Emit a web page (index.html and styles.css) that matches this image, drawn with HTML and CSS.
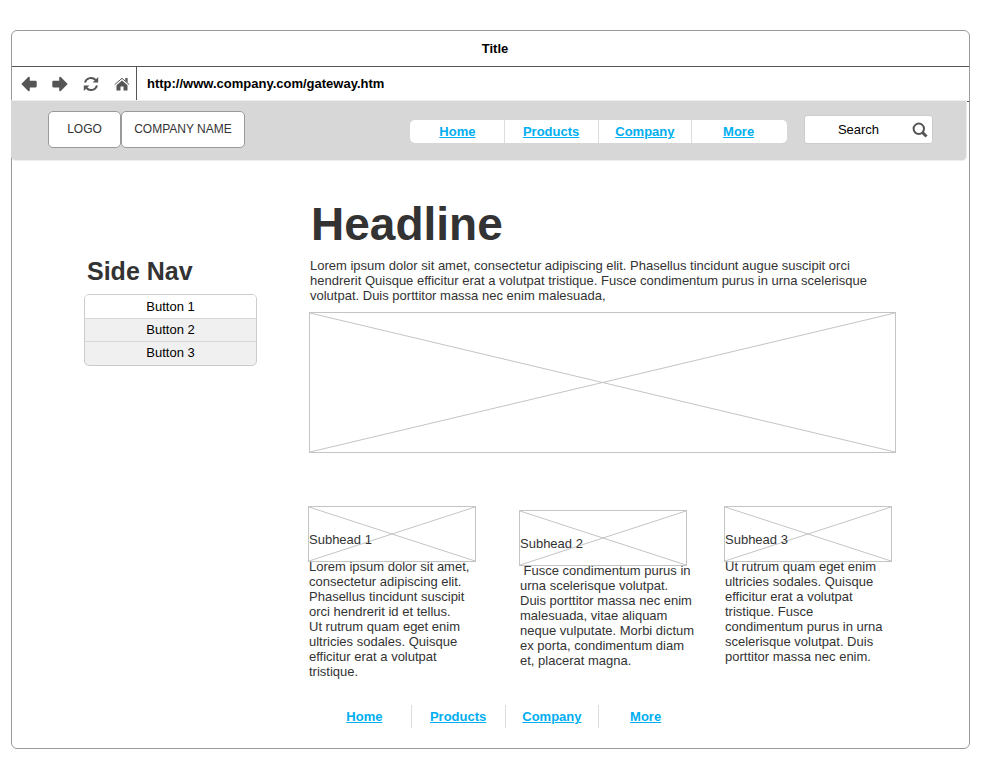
FILE: index.html
```html
<!DOCTYPE html>
<html lang="en">
  <head>
    <meta charset="UTF-8" />
    <meta name="viewport" content="width=device-width, initial-scale=1.0" />
    <title>Title</title>
    <link rel="stylesheet" href="styles.css">
  </head>
  <body>
    <div class="window">
      <div class="title-bar">Title</div>

      <div class="toolbar">
        <div class="controls">
          <button type="button" aria-label="Back">
            <svg width="16" height="16" viewBox="0 0 16 16"><path d="M.3 8 7.200 1Q8.800.2 8.800 2V4.700H14.500Q15.700 4.700 15.700 6V10.300Q15.700 11.400 14.500 11.400H8.800V14Q8.800 15.800 7.200 15Z" /></svg>
          </button>
          <button type="button" aria-label="Forward">
            <svg width="16" height="16" viewBox="0 0 16 16"><path d="M15.700 8 8.800 1Q7.200.2 7.200 2V4.700H1.500Q.3 4.700 .3 6V10.300Q.3 11.400 1.500 11.400H7.200V14Q7.200 15.800 8.800 15Z" /></svg>
          </button>
          <button type="button" aria-label="Reload">
            <svg width="16" height="16" viewBox="0 0 16 16"><path class="line" d="M2 6.500A6.200 6.200 0 0 1 12.600 4M14 9.500A6.200 6.200 0 0 1 3.400 12" /><path d="M15.200 1V6.600H9.600ZM.8 15V9.400H6.400Z" /></svg>
          </button>
          <button type="button" aria-label="Home page">
            <svg width="16" height="16" viewBox="0 0 16 16"><path class="line thin" d="M.8 8.500 8 2.300 15.200 8.500" /><path d="M11.300 2H13.600V6.700L11.300 4.700ZM8 4.600 13.500 9.300V14.500H9.500V10.500H6.500V14.500H2.500V9.300Z" /></svg>
          </button>
        </div>
        <div class="address">http://www.company.com/gateway.htm</div>
      </div>

      <header class="header">
        <div class="brand">
          <div class="logo">LOGO</div>
          <div class="company">COMPANY NAME</div>
        </div>
        <nav class="links header-links">
          <a href="#">Home</a>
          <a href="#">Products</a>
          <a href="#">Company</a>
          <a href="#">More</a>
        </nav>
        <form class="search">
          <input type="text" placeholder="Search" aria-label="Search" />
          <button type="button" aria-label="Submit search">
            <svg width="16" height="16" viewBox="0 0 16 16"><circle class="line" cx="6.800" cy="6.800" r="5.200" /><path class="line handle" d="M10.500 10.500 14.500 14.500" /></svg>
          </button>
        </form>
      </header>

      <div class="content">
        <aside class="side">
          <h2>Side Nav</h2>
          <div class="side-buttons">
            <button type="button" class="active">Button 1</button>
            <button type="button">Button 2</button>
            <button type="button">Button 3</button>
          </div>
        </aside>

        <main class="main">
          <h1>Headline</h1>
          <p class="intro">
            Lorem ipsum dolor sit amet, consectetur adipiscing elit. Phasellus
            tincidunt augue suscipit orci hendrerit Quisque efficitur erat a
            volutpat tristique. Fusce condimentum purus in urna scelerisque
            volutpat. Duis porttitor massa nec enim malesuada,
          </p>
          <div class="placeholder hero">
            <svg class="cross" viewBox="0 0 100 100" preserveAspectRatio="none"><path d="M0 0 100 100M100 0 0 100" /></svg>
          </div>

          <div class="cards">
            <section class="card">
              <div class="placeholder">
                <svg class="cross" viewBox="0 0 100 100" preserveAspectRatio="none"><path d="M0 0 100 100M100 0 0 100" /></svg>
                <h3>Subhead 1</h3>
              </div>
              <p>
                Lorem ipsum dolor sit amet, consectetur adipiscing elit.
                Phasellus tincidunt suscipit orci hendrerit id et tellus.<br />
                Ut rutrum quam eget enim ultricies sodales. Quisque efficitur
                erat a volutpat tristique.
              </p>
            </section>
            <section class="card lower">
              <div class="placeholder">
                <svg class="cross" viewBox="0 0 100 100" preserveAspectRatio="none"><path d="M0 0 100 100M100 0 0 100" /></svg>
                <h3>Subhead 2</h3>
              </div>
              <p>
                &nbsp;Fusce condimentum purus in urna scelerisque volutpat.
                Duis porttitor massa nec enim malesuada, vitae aliquam neque
                vulputate. Morbi dictum ex porta, condimentum diam et, placerat
                magna.
              </p>
            </section>
            <section class="card">
              <div class="placeholder">
                <svg class="cross" viewBox="0 0 100 100" preserveAspectRatio="none"><path d="M0 0 100 100M100 0 0 100" /></svg>
                <h3>Subhead 3</h3>
              </div>
              <p>
                Ut rutrum quam eget enim ultricies sodales. Quisque efficitur
                erat a volutpat tristique. Fusce condimentum purus in urna
                scelerisque volutpat. Duis porttitor massa nec enim.
              </p>
            </section>
          </div>

          <footer class="footer">
            <nav class="links">
              <a href="#">Home</a>
              <a href="#">Products</a>
              <a href="#">Company</a>
              <a href="#">More</a>
            </nav>
          </footer>
        </main>
      </div>
    </div>
  </body>
</html>
```

FILE: styles.css
```css
* {
  box-sizing: border-box;
  margin: 0;
  padding: 0;
}

body {
  font-family: "Liberation Sans", Arial, sans-serif;
  font-size: 13px;
  line-height: 15px;
  color: #333;
  background: #fff;
  padding: 30px 30px 11px 11px;
}

button,
input {
  font: inherit;
  color: #000;
  background: none;
  border: none;
}

svg {
  display: block;
  fill: #555;
}

.line {
  fill: none;
  stroke: #555;
  stroke-width: 2;
}

.thin {
  stroke-width: 1;
}

.handle {
  stroke-width: 3;
}

/* Browser frame */
.window {
  border: 1px solid #999;
  border-radius: 6px;
}

.title-bar {
  height: 36px;
  line-height: 35px;
  padding-left: 9px;
  text-align: center;
  font-weight: bold;
  color: #000;
  border-bottom: 1px solid #555;
}

.toolbar {
  display: flex;
  height: 35px;
  border-bottom: 1px solid #555;
}

.controls {
  display: flex;
  align-items: center;
  gap: 15px;
  padding: 0 6px 0 9px;
  border-right: 1px solid #555;
}

.address {
  padding-left: 10px;
  line-height: 34px;
  font-weight: bold;
  color: #000;
}

/* Site header */
.header {
  position: relative;
  display: flex;
  align-items: center;
  height: 61px;
  margin: -2px 2px 0 -1px;
  padding: 0 33px 0 36px;
  background: #d7d7d7;
  border: 1px solid #eee;
  border-left-color: #d7d7d7;
  border-radius: 0 0 5px 5px;
}

.brand {
  display: flex;
  margin-top: -3px;
  font-size: 12px;
}

.logo,
.company {
  height: 37px;
  line-height: 35px;
  text-align: center;
  background: #fff;
  border: 1px solid #999;
  border-radius: 5px;
}

.logo {
  width: 73px;
}

.company {
  width: 124px;
}

.links {
  display: flex;
  width: 374px;
}

.links a {
  flex: 1;
  height: 23px;
  line-height: 23px;
  text-align: center;
  font-weight: bold;
  color: #00aeef;
}

.links a + a {
  border-left: 1px solid #ddd;
}

.header-links {
  width: 377px;
  margin: 2px 0 0 auto;
  padding: 0 2px 0 1px;
  background: #fff;
  border-radius: 5px;
}

.search {
  display: flex;
  align-items: center;
  width: 129px;
  height: 29px;
  margin: 0 0 2px 17px;
  background: #fff;
  border: 1px solid #ccc;
  border-radius: 3px;
}

.search input {
  flex: 1;
  width: 100%;
  text-align: center;
}

.search input::placeholder {
  color: #000;
  opacity: 1;
}

.search button {
  padding-right: 4px;
}

/* Page body */
.content {
  display: flex;
  padding: 36px 73px 20px 72px;
}

.side {
  width: 173px;
  margin: 59px 52px 0 0;
}

.side h2 {
  padding-left: 3px;
  font-size: 25px;
  line-height: 30px;
}

.side-buttons {
  margin-top: 8px;
  padding-bottom: 1px;
  background: #f0f0f0;
  border: 1px solid #ccc;
  border-radius: 5px;
  overflow: hidden;
}

.side-buttons button {
  display: block;
  width: 100%;
  height: 23px;
}

.side-buttons button + button {
  padding-bottom: 2px;
  border-top: 1px solid #d7d7d7;
}

.side-buttons .active {
  background: #fff;
}

.main {
  flex: 1;
}

.main h1 {
  padding-left: 2px;
  font-size: 46px;
  line-height: 54px;
}

.intro {
  margin-top: 7px;
  padding: 0 20px 0 1px;
}

.placeholder {
  position: relative;
  height: 56px;
  border: 1px solid #c4c4c4;
}

.cross {
  position: absolute;
  width: 100%;
  height: 100%;
  stroke: #c4c4c4;
}

.cross path {
  vector-effect: non-scaling-stroke;
}

.hero {
  height: 141px;
  margin-top: 9px;
}

.cards {
  display: grid;
  grid-template-columns: 211fr 205fr 172fr;
  margin: 53px 0 0 -1px;
}

.card .placeholder {
  width: 168px;
}

.card h3 {
  position: relative;
  padding-top: 25px;
  font-size: 13px;
  font-weight: normal;
}

.card p {
  position: relative;
  width: 168px;
  margin-top: -3px;
  padding-left: 1px;
}

.lower {
  margin-top: 4px;
}

.lower p {
  width: 176px;
}

.footer {
  margin: 26px 0 0 9px;
}
```
